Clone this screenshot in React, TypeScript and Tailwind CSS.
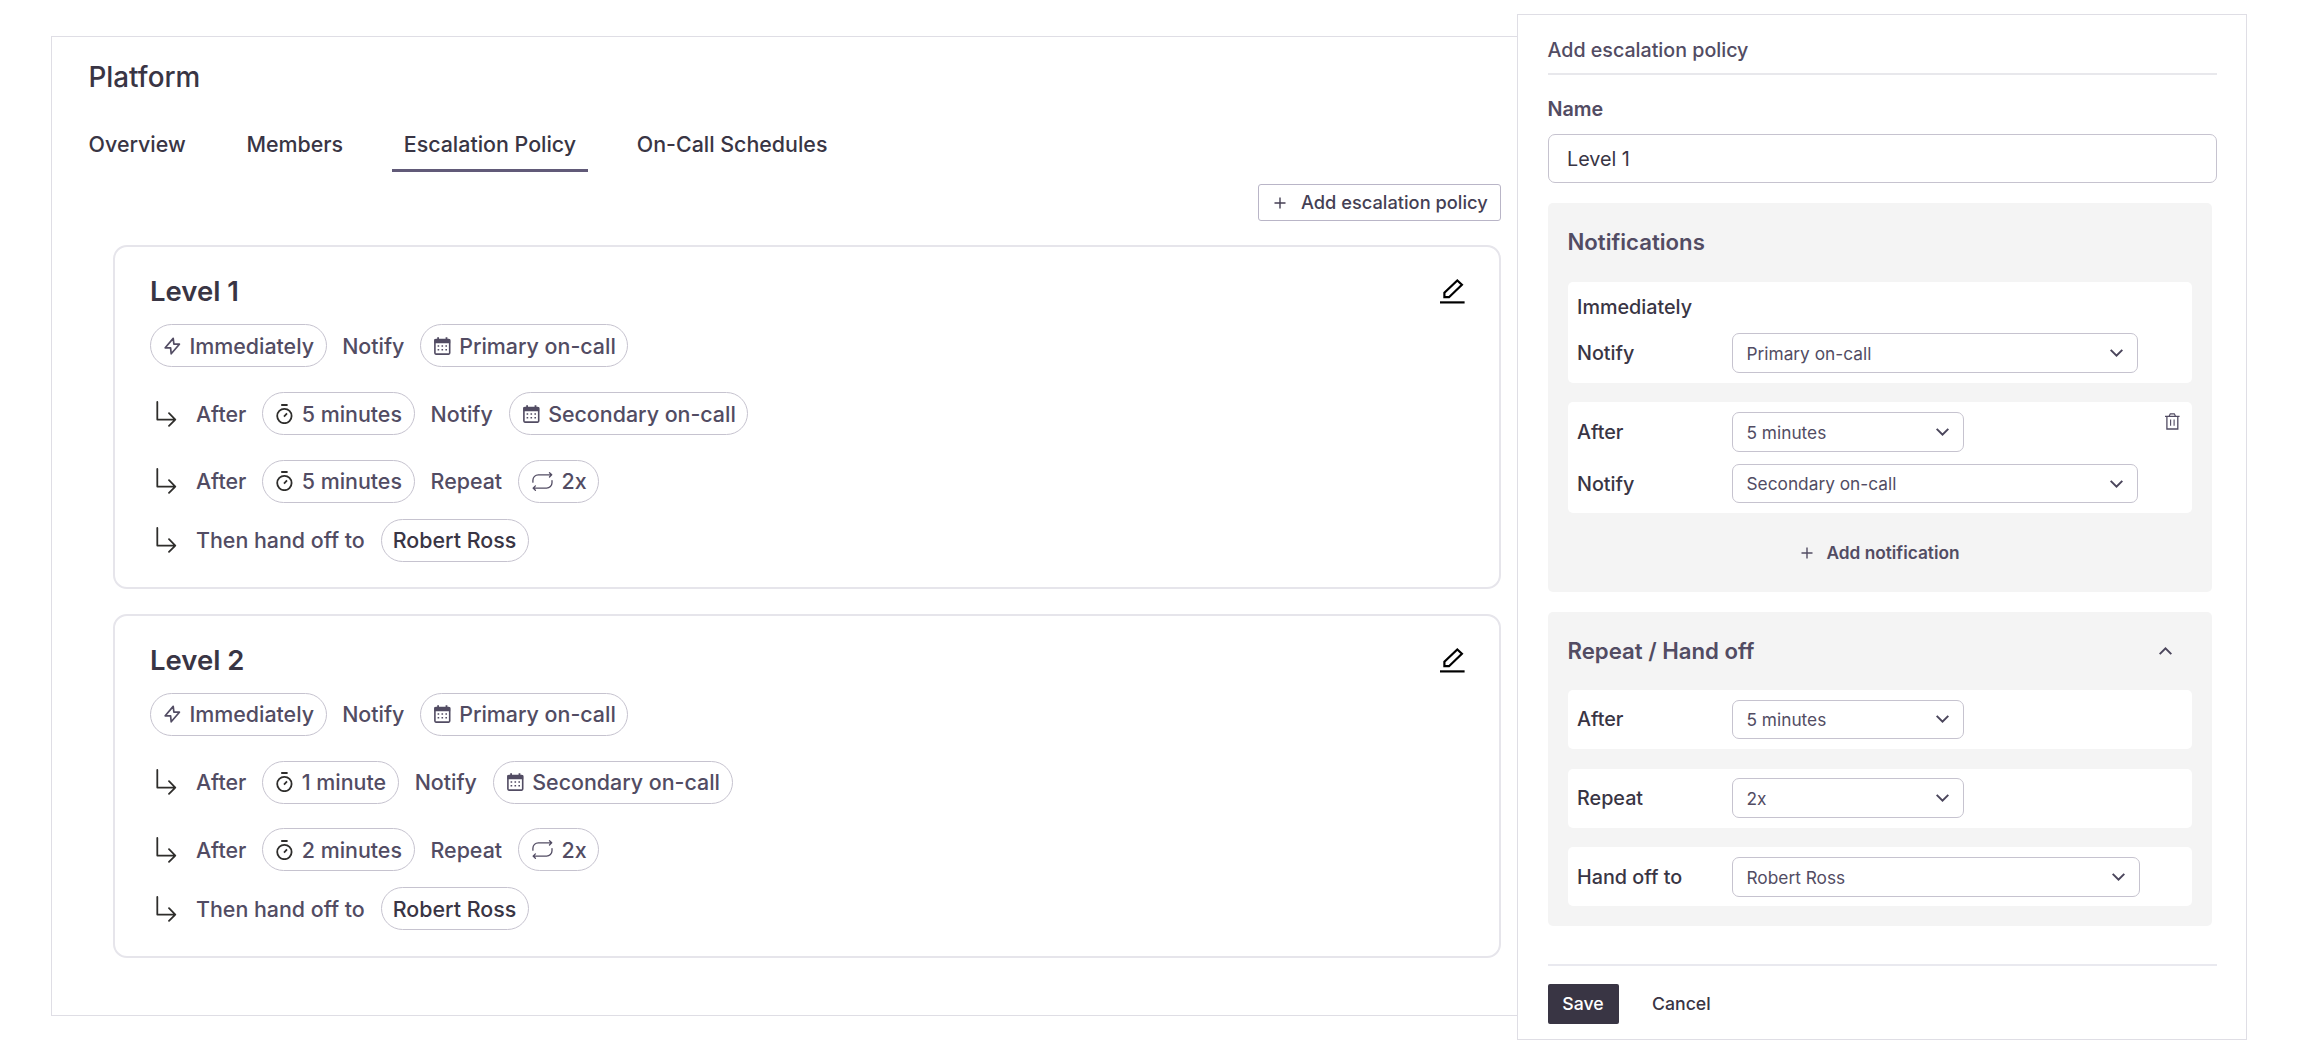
import React from 'react';

type IconProps = { className?: string };

const BoltIcon: React.FC = () => (
  <svg width="17" height="18" viewBox="0 0 17 18" fill="none" stroke="currentColor" strokeWidth="1.7" strokeLinejoin="round">
    <path d="M9.2 1.4 1.2 10.8H6.6L7.2 16.8 15.4 7.2H9.9z" />
  </svg>
);

const CalendarIcon: React.FC = () => (
  <svg width="17" height="18" viewBox="0 0 17 18" fill="none">
    <rect x="0.9" y="2.6" width="14.8" height="14.5" rx="1" stroke="currentColor" strokeWidth="1.6" />
    <path d="M.4 2.2h15.8v4H.4zM3.2.2h1.8v2.4H3.2zM11.6.2h1.8v2.4h-1.8z" fill="currentColor" />
    <path
      d="M3.6 8.2h1.6v1.6H3.6zM7.5 8.2h1.6v1.6H7.5zM11.4 8.2H13v1.6h-1.6zM3.6 12h1.6v1.6H3.6zM7.5 12h1.6v1.6H7.5zM11.4 12H13v1.6h-1.6z"
      fill="currentColor"
    />
  </svg>
);

const StopwatchIcon: React.FC = () => (
  <svg width="17" height="20" viewBox="0 0 17 20" fill="none" stroke="#2e2d2b" strokeWidth="1.8">
    <path d="M5.2 1h6.4M8 12.6l3-3.2" />
    <circle cx="8.4" cy="12" r="7.2" />
  </svg>
);

const RepeatIcon: React.FC = () => (
  <svg width="21" height="19" viewBox="0 0 21 19" fill="none" stroke="currentColor" strokeWidth="1.3" strokeLinecap="round" strokeLinejoin="round">
    <path d="M.9 10.2V8.2a5.4 5.4 0 0 1 5.4-5.4h13.2M17.5.7l2.2 2.1-2.2 2.2" />
    <path d="M20 8.6v2.1a5.4 5.4 0 0 1-5.4 5.4H1.2M3.4 13.9l-2.3 2.2 2.3 2.2" />
  </svg>
);

const BranchIcon: React.FC = () => (
  <svg width="21" height="26" viewBox="0 0 21 26" fill="none" stroke="#2e2d2b" strokeWidth="1.8" strokeLinecap="round" strokeLinejoin="round">
    <path d="M1.3 1v17.6h18M13 12.2l6.3 6.4-6.3 6.2" />
  </svg>
);

const EditIcon: React.FC = () => (
  <svg width="25" height="26" viewBox="0 0 25 26" fill="none" stroke="#000" strokeWidth="2.2">
    <path d="M0 23.4h24.6" />
    <path d="M4.4 18.2v-4.4L17.3 1.5l4.6 4.2L9 18.2z" />
  </svg>
);

const TrashIcon: React.FC = () => (
  <svg width="15" height="17" viewBox="0 0 15 17" fill="none" stroke="#524c63">
    <path d="M0 3.3h14.6M4.2 3l1.1-2.2h4L10.4 3" strokeWidth="1.2" />
    <path d="M1.9 3.3V16h10.9V3.3" strokeWidth="1.3" />
    <path d="M5.6 6.5v6.2M9.1 6.5v6.2" strokeWidth="1.1" />
  </svg>
);

const PlusIcon: React.FC = () => (
  <svg width="12" height="12" viewBox="0 0 12 12" fill="none" stroke="currentColor" strokeWidth="1.4">
    <path d="M6 .5v11M.5 6h11" />
  </svg>
);

const ChevronIcon: React.FC<IconProps> = ({ className }) => (
  <svg className={className} width="13" height="8" viewBox="0 0 13 8" fill="none" stroke="#4b465c" strokeWidth="2">
    <path d="M.7.9 6.5 6.6 12.3.9" />
  </svg>
);

type PillProps = { icon?: React.ReactNode; children: React.ReactNode };

const Pill: React.FC<PillProps> = ({ icon, children }) => (
  <span
    className={
      icon
        ? 'flex h-[43px] items-center gap-[8.4px] rounded-full border border-[#c6c3cf] pr-[11.6px] pl-[13px]'
        : 'flex h-[43px] items-center rounded-full border border-[#c6c3cf] pr-[12px] pl-[11px] text-[#393544]'
    }
  >
    {icon}
    {children}
  </span>
);

type LevelProps = { title: string; notifyAfter: string; repeatAfter: string };

const LevelCard: React.FC<LevelProps> = ({ title, notifyAfter, repeatAfter }) => (
  <section className="h-[344px] rounded-[14px] border-2 border-[#e6e5eb] pt-[27px] pr-[34px] pl-[35px]">
    <div className="flex justify-between">
      <h2 className="text-[27.5px] leading-[34px] font-semibold text-[#393544]">{title}</h2>
      <button className="mt-[5px] h-[26px]" aria-label="Edit level">
        <EditIcon />
      </button>
    </div>
    <div className="mt-[16.4px] flex items-center gap-[15.5px]">
      <Pill icon={<BoltIcon />}>Immediately</Pill>
      <span>Notify</span>
      <Pill icon={<CalendarIcon />}>Primary on-call</Pill>
    </div>
    <div className="mt-[25.1px] flex items-center gap-4 pl-[6px]">
      <BranchIcon />
      <span className="ml-[3px]">After</span>
      <Pill icon={<StopwatchIcon />}>{notifyAfter}</Pill>
      <span>Notify</span>
      <Pill icon={<CalendarIcon />}>Secondary on-call</Pill>
    </div>
    <div className="mt-[24.5px] flex items-center gap-4 pl-[6px]">
      <BranchIcon />
      <span className="ml-[3px]">After</span>
      <Pill icon={<StopwatchIcon />}>{repeatAfter}</Pill>
      <span>Repeat</span>
      <Pill icon={<RepeatIcon />}>2x</Pill>
    </div>
    <div className="mt-[15.8px] flex items-center gap-4 pl-[6px]">
      <BranchIcon />
      <span className="ml-[3px]">Then hand off to</span>
      <Pill>Robert Ross</Pill>
    </div>
  </section>
);

const tabs = ['Overview', 'Members', 'Escalation Policy', 'On-Call Schedules'];

const TeamPanel: React.FC = () => (
  <main className="mt-[36px] ml-[51px] h-[980px] w-[1466px] border border-r-0 border-[#dfdee5] pt-5 text-[#524c63]">
    <h1 className="pl-[36.5px] text-[27.8px] leading-10 font-medium text-[#393544]">Platform</h1>
    <nav className="mt-8 flex gap-[37.7px] pl-[25.1px] text-[21.4px] leading-[30px] text-[#393544]">
      {tabs.map((tab) => (
        <a
          key={tab}
          href="#"
          className={
            tab === 'Escalation Policy'
              ? 'border-b-[3px] border-[#615a78] px-[11.5px] pb-[10px]'
              : 'border-b-[3px] border-transparent px-[11.5px] pb-[10px]'
          }
        >
          {tab}
        </a>
      ))}
    </nav>
    <div className="mt-3 flex justify-end pr-[16px]">
      <button className="flex h-[37px] w-[243px] items-center gap-[15px] rounded-[3px] border border-[#b9b5c7] pl-[15px] text-[18.25px] text-[#453f54]">
        <PlusIcon />
        Add escalation policy
      </button>
    </div>
    <div className="mt-6 flex flex-col gap-[24.5px] pr-[16px] pl-[61px] text-[21.4px] leading-[30px]">
      <LevelCard title="Level 1" notifyAfter="5 minutes" repeatAfter="5 minutes" />
      <LevelCard title="Level 2" notifyAfter="1 minute" repeatAfter="2 minutes" />
    </div>
  </main>
);

type FieldProps = { label: string; value: string; width: string; action?: React.ReactNode };

const Field: React.FC<FieldProps> = ({ label, value, width, action }) => (
  <div className="flex">
    <span className="flex w-[155px] items-center">{label}</span>
    <button
      className={`flex h-[39.5px] items-center justify-between rounded-[7px] border border-[#c6c3cf] bg-white pr-[14.5px] pl-[13.5px] text-[17.3px] font-normal text-[#524c63] ${width}`}
    >
      <span className="pt-[1.5px]">{value}</span>
      <ChevronIcon />
    </button>
    {action}
  </div>
);

const PolicyForm: React.FC = () => (
  <aside className="mt-[14px] h-[1026px] w-[730px] border border-[#dfdee5] bg-white pt-[23px] pl-[29.5px] text-[19.75px] leading-6 text-[#393544]">
    <div className="w-[669px]">
      <h2 className="border-b-2 border-[#e8e8ec] pb-[11px] text-[19.65px] text-[#524c63]">Add escalation policy</h2>
      <label className="mt-[22px] block font-semibold text-[#524c63]">Name</label>
      <div className="mt-[13px] flex h-[49px] items-center rounded-[7px] border border-[#c6c3cf] pt-px pl-[18.5px] font-normal">Level 1</div>

      <section className="mt-5 h-[389px] w-[664px] rounded-[5px] bg-[#f4f4f4] pt-[25px] pr-[19.5px] pl-5">
        <h3 className="text-[22.2px] leading-7 font-semibold text-[#524c63]">Notifications</h3>
        <div className="mt-[25.5px] rounded-[5px] bg-white pt-[13px] pb-[10px] pl-[9.5px]">
          <p className="mb-[14.5px]">Immediately</p>
          <Field label="Notify" value="Primary on-call" width="w-[406px]" />
        </div>
        <div className="mt-[19.5px] flex flex-col gap-3 rounded-[5px] bg-white pt-[10.3px] pr-[12px] pb-[9.5px] pl-[9.5px]">
          <Field
            label="After"
            value="5 minutes"
            width="w-[232px]"
            action={
              <button className="mt-px ml-auto h-[17px]" aria-label="Remove notification">
                <TrashIcon />
              </button>
            }
          />
          <Field label="Notify" value="Secondary on-call" width="w-[406px]" />
        </div>
        <button className="mx-auto mt-[28.4px] flex items-center gap-[13px] pl-[1.5px] text-[17.3px] font-semibold text-[#524c63]">
          <PlusIcon />
          Add notification
        </button>
      </section>

      <section className="mt-[19.5px] h-[314.5px] w-[664px] rounded-[5px] bg-[#f4f4f4] pt-[25px] pr-[19.5px] pl-5">
        <div className="flex items-center justify-between pr-[20px]">
          <h3 className="text-[22.2px] leading-7 font-semibold text-[#524c63]">Repeat / Hand off</h3>
          <ChevronIcon className="rotate-180" />
        </div>
        <div className="mt-[25.4px] flex flex-col gap-[19.7px]">
          <div className="rounded-[5px] bg-white py-[9.75px] pl-[9.5px]">
            <Field label="After" value="5 minutes" width="w-[232px]" />
          </div>
          <div className="rounded-[5px] bg-white py-[9.75px] pl-[9.5px]">
            <Field label="Repeat" value="2x" width="w-[232px]" />
          </div>
          <div className="rounded-[5px] bg-white py-[9.75px] pl-[9.5px]">
            <Field label="Hand off to" value="Robert Ross" width="w-[408px]" />
          </div>
        </div>
      </section>

      <div className="mt-[38px] flex items-center gap-[33.5px] border-t-2 border-[#e9e9ef] pt-[18px] text-[17.7px]">
        <button className="h-[40px] w-[71px] rounded-[2px] bg-[#393544] text-white">Save</button>
        <button>Cancel</button>
      </div>
    </div>
  </aside>
);

const App: React.FC = () => {
  return (
    <div className="flex h-[1054px] w-[2314px] items-start bg-white font-['Inter',sans-serif] font-medium">
      <TeamPanel />
      <PolicyForm />
    </div>
  );
};

export default App;
